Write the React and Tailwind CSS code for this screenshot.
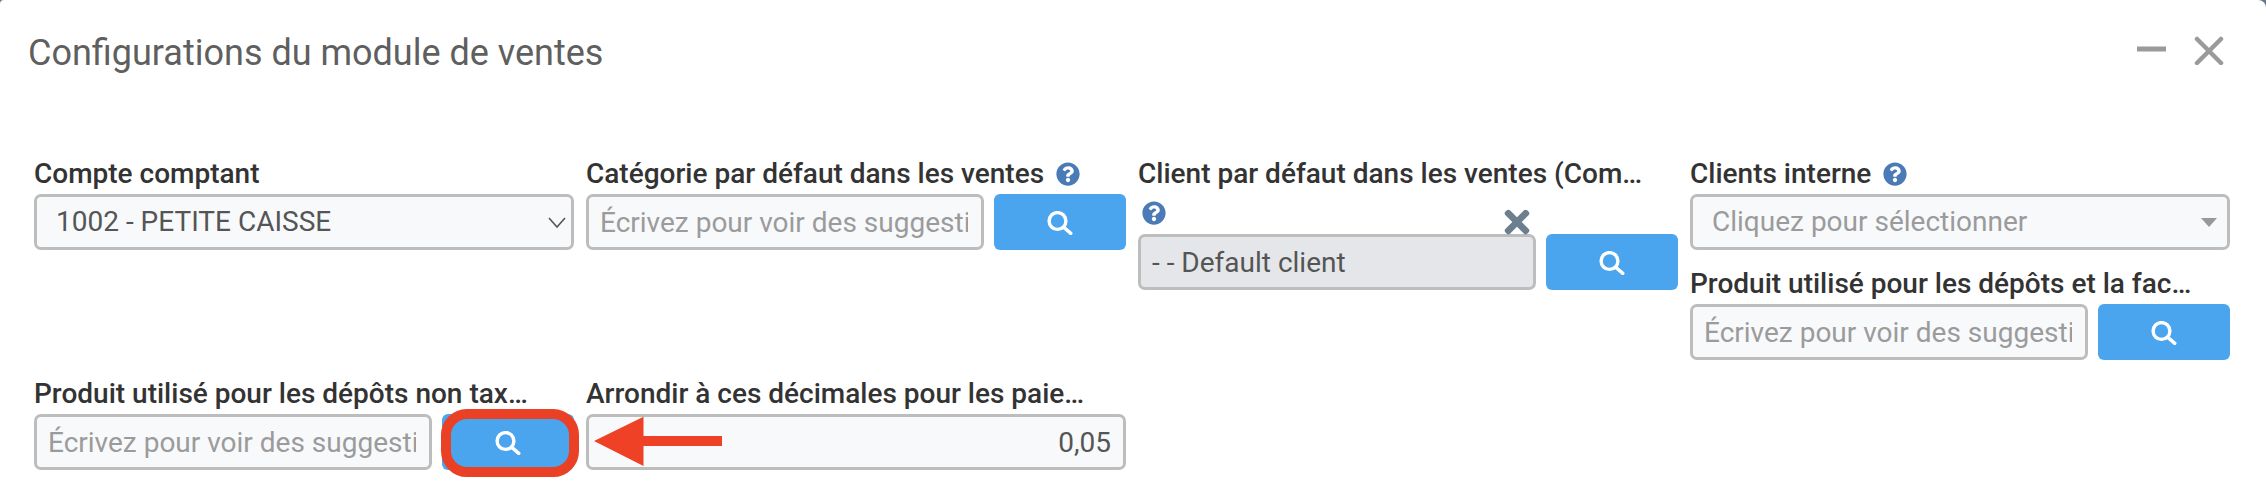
import { FaQuestionCircle, FaTimes } from 'react-icons/fa';

function SearchIcon() {
    return (
        <svg className="mt-[2px]" width="26" height="24" viewBox="0 0 26 24" fill="none" stroke="#fff" strokeWidth="3.4">
            <circle cx="10.5" cy="10" r="8.4" />
            <path d="M16.8 16.4 L23.8 22.4" strokeLinecap="round" />
        </svg>
    );
}

function Help() {
    return <FaQuestionCircle className="text-[#4a7bb7] shrink-0" size={24} />;
}

function Label({ children, icon }) {
    return (
        <div className="flex items-center gap-[12px] h-[41px]">
            <span className="truncate max-w-[506px] text-[28px] leading-[40px] font-medium text-[#333]">{children}</span>
            {icon && <Help />}
        </div>
    );
}

function SearchField({ placeholder, value, disabled, clearable }) {
    return (
        <div className="flex gap-[10px]">
            <div className="relative w-[398px]">
                {clearable && <FaTimes className="absolute right-[1px] top-[-30px] text-[#6c7f8e]" size={36} />}
                <input
                    readOnly
                    placeholder={placeholder}
                    value={value || ''}
                    className={`block w-full h-[56px] pl-[11px] pr-[13px] border-[3px] border-[#bdbdbd] rounded-[7px] text-[28px] text-[#555] placeholder:text-[#9b9b9b] outline-none ${disabled ? 'bg-[#e4e6ea]' : 'bg-[#f8f9fb]'}`}
                />
            </div>
            <button className="w-[132px] h-[56px] bg-[#4aa5ee] rounded-[6px] flex items-center justify-center">
                <SearchIcon />
            </button>
        </div>
    );
}

function App() {
    const suggest = 'Écrivez pour voir des suggestions';

    return (
        <div className="w-[2266px] h-[504px] bg-[#66788a]">
            <div className="relative w-full h-full bg-white rounded-tl-[4px] rounded-tr-[8px] overflow-hidden font-['Roboto',sans-serif]">
                <header className="flex items-center justify-between h-[100px] pl-[28px] pr-[42px]">
                    <h1 className="mt-[5px] text-[36px] font-normal text-[#5f5f5f]">Configurations du module de ventes</h1>
                    <div className="flex items-center gap-[27px]">
                        <svg width="30" height="30" viewBox="0 0 30 30"><path d="M0 14 H29" stroke="#9a9a9a" strokeWidth="5" /></svg>
                        <svg width="30" height="30" viewBox="0 0 30 30"><path d="M3 4 L27 28 M27 4 L3 28" stroke="#9a9a9a" strokeWidth="4.5" strokeLinecap="round" /></svg>
                    </div>
                </header>

                <div className="grid grid-cols-[540px_540px_540px_540px] grid-rows-[220px_auto] gap-x-[12px] ml-[34px] mt-[53px]">
                    <div>
                        <Label>Compte comptant</Label>
                        <div className="flex items-center justify-between h-[56px] pl-[19px] pr-[5px] border-[3px] border-[#bdbdbd] rounded-[7px] bg-[#f8f9fb] text-[28px] text-[#555]">
                            <span>1002 - PETITE CAISSE</span>
                            <svg width="18" height="11" viewBox="0 0 18 11" fill="none"><path d="M1 1 L9 10 L17 1" stroke="#555" strokeWidth="1.6" /></svg>
                        </div>
                    </div>

                    <div>
                        <Label icon>Catégorie par défaut dans les ventes</Label>
                        <SearchField placeholder={suggest} />
                    </div>

                    <div>
                        <Label>Client par défaut dans les ventes (Comptant)</Label>
                        <div className="h-[40px] pt-[7px] pl-[4px]"><Help /></div>
                        <SearchField value="- - Default client" disabled clearable />
                    </div>

                    <div className="row-span-2">
                        <Label icon>Clients interne</Label>
                        <div className="flex items-center justify-between h-[56px] pl-[19px] pr-[10px] border-[3px] border-[#bdbdbd] rounded-[7px] bg-[#f8f9fb] text-[28px] text-[#9b9b9b]">
                            <span>Cliquez pour sélectionner</span>
                            <svg width="16" height="9" viewBox="0 0 16 9"><path d="M0 0 H16 L8 9 Z" fill="#999" /></svg>
                        </div>
                        <div className="mt-[13px]">
                            <Label>Produit utilisé pour les dépôts et la facturation</Label>
                            <SearchField placeholder={suggest} />
                        </div>
                    </div>

                    <div>
                        <Label>Produit utilisé pour les dépôts non taxables</Label>
                        <SearchField placeholder={suggest} />
                    </div>

                    <div>
                        <Label>Arrondir à ces décimales pour les paiements</Label>
                        <input
                            readOnly
                            value="0,05"
                            className="block w-full h-[56px] px-[12px] border-[3px] border-[#bdbdbd] rounded-[7px] bg-[#f8f9fb] text-[28px] text-[#555] text-right outline-none"
                        />
                    </div>
                </div>

                {/* annotation drawn over the screenshot */}
                <div className="absolute left-[441px] top-[409px] w-[138px] h-[68px] border-[10px] border-[#ea4025] rounded-[26px]"></div>
                <svg className="absolute left-[590px] top-[412px]" width="140" height="60" viewBox="0 0 140 60">
                    <path d="M4 29 L53.5 4.7 L53.5 24 L132 24 L132 34 L53.5 34 L53.5 54 Z" fill="#ee4126" />
                </svg>
            </div>
        </div>
    );
}

export default App;
